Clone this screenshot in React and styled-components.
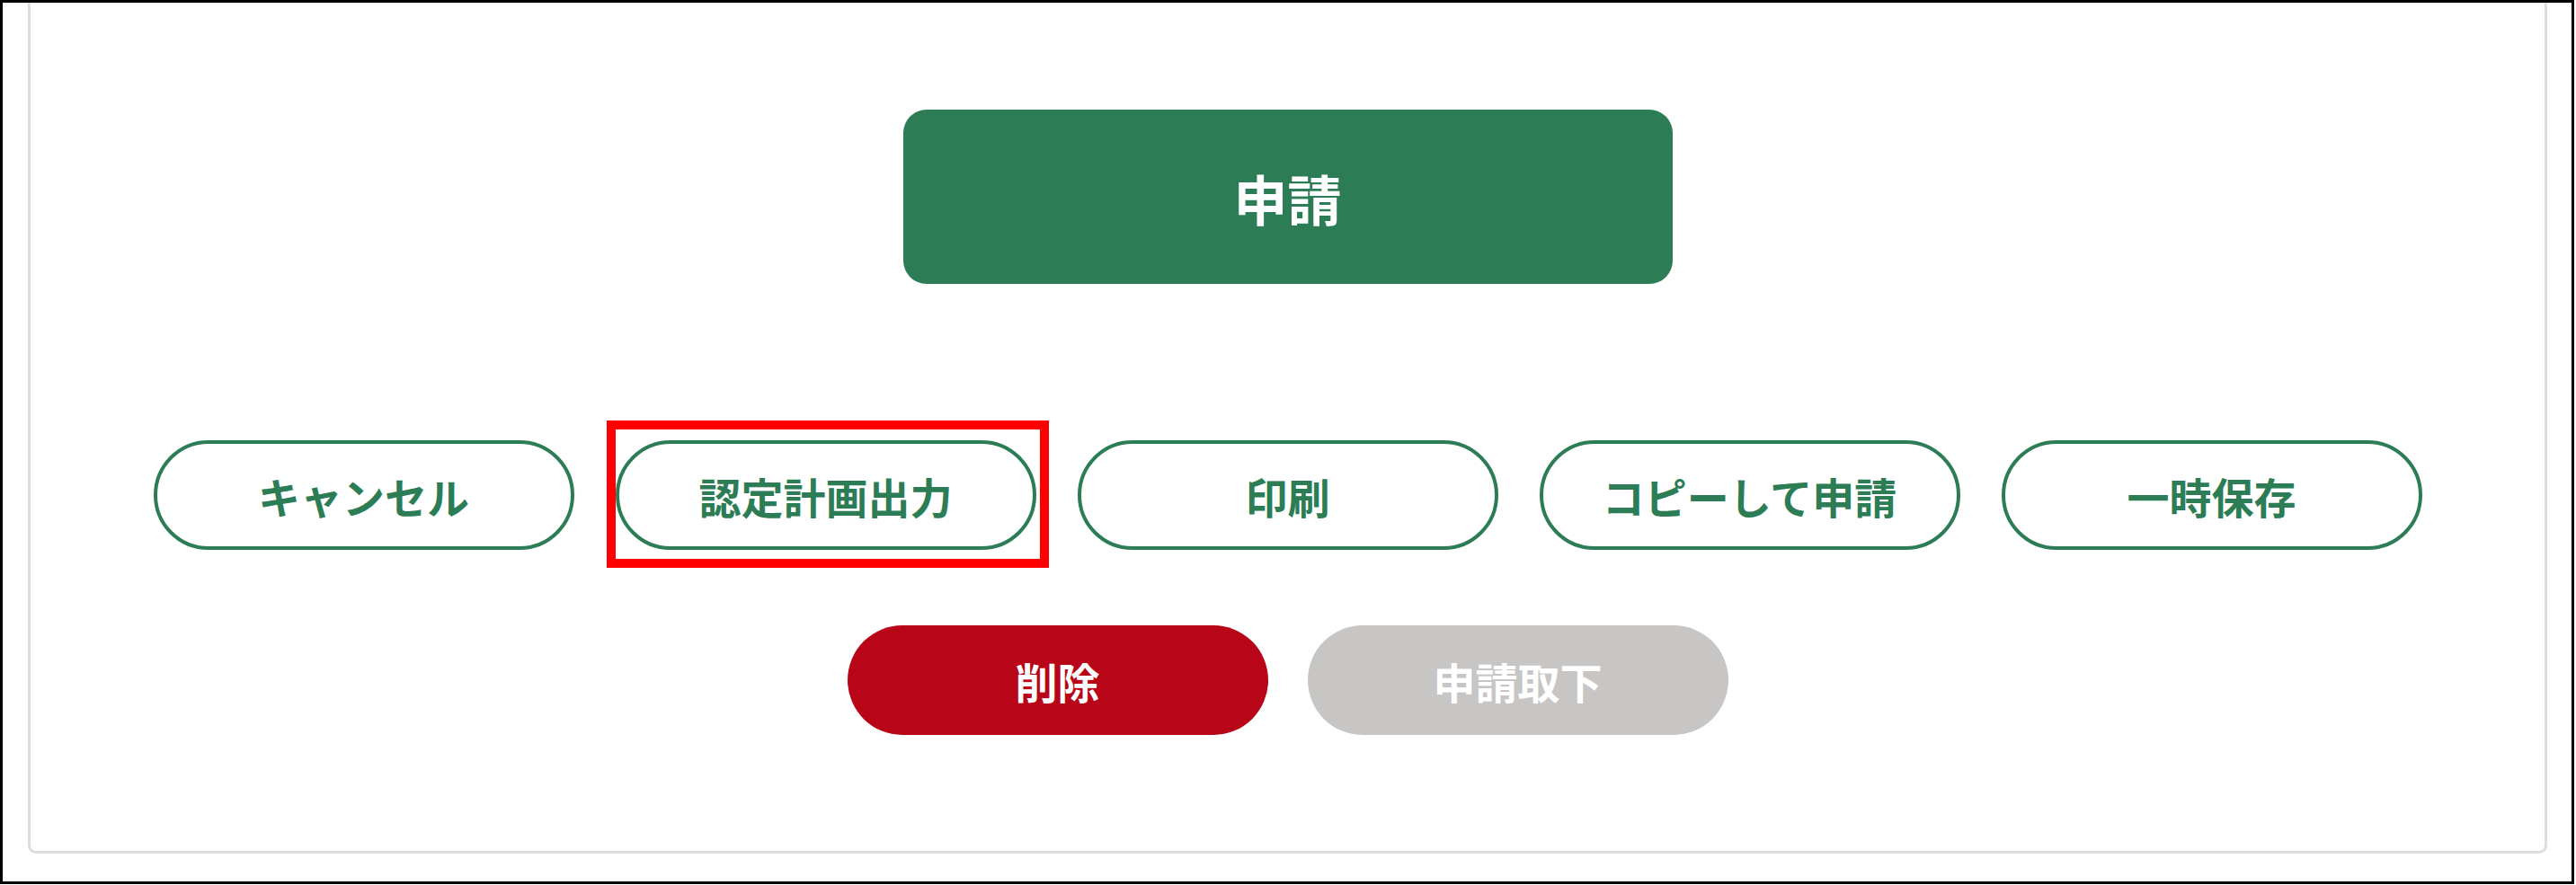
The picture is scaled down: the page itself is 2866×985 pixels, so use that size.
import styled, { createGlobalStyle, css } from 'styled-components'

const GlobalStyle = createGlobalStyle`
  html, body {
    margin: 0;
    padding: 0;
    background: #fff;
  }
  body {
    font-family: "Noto Sans CJK JP", "Noto Sans", sans-serif;
  }
`

const GREEN = '#2c7d55'

//-------------------------Data-----------------------
const actions = [
  { label: 'キャンセル' },
  { label: '認定計画出力', highlighted: true },
  { label: '印刷' },
  { label: 'コピーして申請' },
  { label: '一時保存' },
]

const App = () => {
  return <>
    <GlobalStyle />
    <Frame>
      <Card>
        <SubmitButton type='button'>申請</SubmitButton>

        <ActionRow>
          {actions.map(({ label, highlighted }) => (
            <OutlineButton key={label} type='button' $highlighted={highlighted}>
              {label}
            </OutlineButton>
          ))}
        </ActionRow>

        <DangerRow>
          <PillButton type='button' $variant='danger'>削除</PillButton>
          <PillButton type='button' $variant='disabled' disabled>申請取下</PillButton>
        </DangerRow>
      </Card>
    </Frame>
  </>
}

const Frame = styled.main`
  box-sizing: border-box;
  width: 2864px;
  height: 984px;
  border: 3px solid #000;
  padding: 0 27px 31px 28px;
  display: flex;
`

const Card = styled.section`
  flex: 1;
  display: flex;
  flex-direction: column;
  align-items: center;
  border: 3px solid #dddddd;
  border-top: none;
  border-radius: 0 0 9px 9px;
  padding-top: 119px;
`

const SubmitButton = styled.button`
  width: 856px;
  height: 194px;
  border: none;
  border-radius: 26px;
  background: ${GREEN};
  color: #fff;
  font-family: inherit;
  font-size: 60px;
  font-weight: 700;
  cursor: pointer;
`

const ActionRow = styled.div`
  display: flex;
  gap: 46px;
  margin-top: 174px;
`

const DangerRow = styled.div`
  display: flex;
  gap: 44px;
  margin-top: 84px;
`

const pill = css`
  box-sizing: border-box;
  width: 468px;
  height: 122px;
  border-radius: 61px;
  font-family: inherit;
  font-size: 47px;
  font-weight: 700;
  cursor: pointer;
`

const OutlineButton = styled.button`
  ${pill};
  position: relative;
  background: #fff;
  border: 4px solid ${GREEN};
  color: ${GREEN};

  ${({ $highlighted }) => $highlighted && css`
    &::after {
      content: '';
      position: absolute;
      top: -26px;
      left: -14px;
      right: -18px;
      bottom: -24px;
      border: 10px solid #ff0000;
      pointer-events: none;
    }
  `}
`

const PillButton = styled.button`
  ${pill};
  border: none;
  color: #fff;
  background: ${({ $variant }) => ($variant === 'danger' ? '#b80517' : '#c8c6c4')};

  &:disabled {
    cursor: default;
  }
`

export default App
